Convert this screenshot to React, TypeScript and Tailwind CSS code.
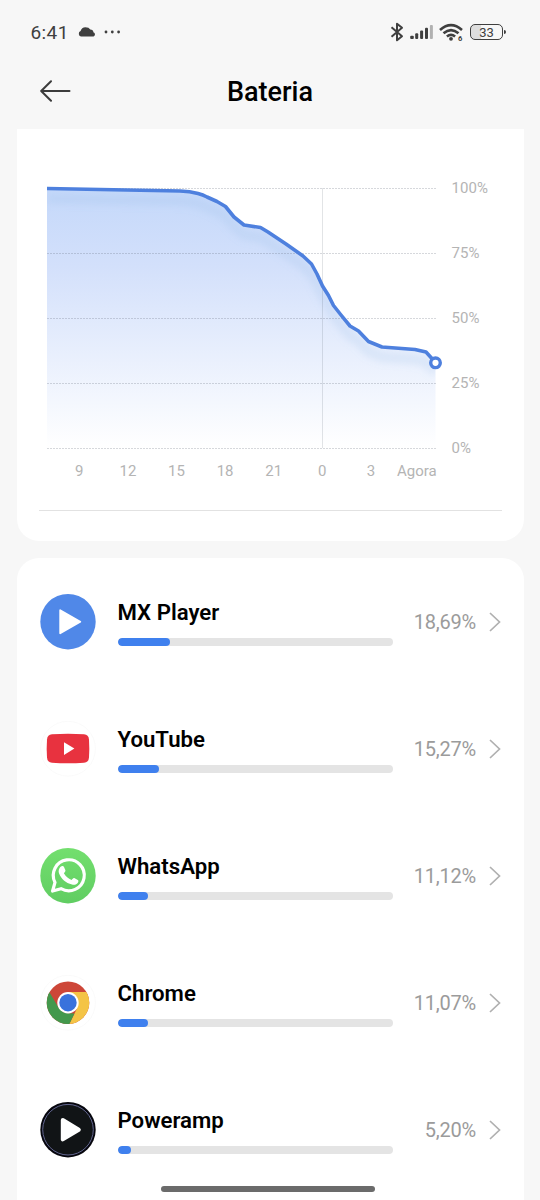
import type { ReactNode } from "react";

type AppUsage = {
  name: string;
  percent: string;
  barWidth: number;
  icon: ReactNode;
};

const yLabels = ["100%", "75%", "50%", "25%", "0%"];
const xLabels = ["9", "12", "15", "18", "21", "0", "3"];

const levelLine =
  "M0 6.5 L133 9 Q143 9.4 151 11.6 Q156 13 160 15 L170 19.5 L178.5 24.5 L187 35 L197 43 L213.5 45.5 L221 50 L239 62 L256 74 L264.5 82 L270 92 L275.5 104 L281.5 113.5 L286.5 123.5 L294 133 L303 144 L311.5 149 L321.5 159.5 L335 165 L368 167.5 L379 170 L388.5 180.5";

function MxPlayerIcon() {
  return (
    <svg viewBox="0 0 56 56" className="size-14">
      <circle cx="28" cy="27.7" r="27.7" fill="#5088e8" />
      <path
        d="M20.2 16.2 L40.3 27.7 L20.2 39.2 Z"
        fill="#fff"
        stroke="#fff"
        strokeWidth="1.8"
        strokeLinejoin="round"
      />
    </svg>
  );
}

function YouTubeIcon() {
  return (
    <svg viewBox="0 0 56 56" className="size-14">
      <circle cx="28" cy="27.7" r="27.4" fill="#fff" stroke="#f8f8f8" strokeWidth="0.7" />
      <path
        d="M12 13.2 Q28 12.2 44 13.2 Q48.6 13.5 49 18.5 Q49.6 27.5 49 36.5 Q48.6 41.5 44 41.8 Q28 42.8 12 41.8 Q7.4 41.5 7 36.5 Q6.4 27.5 7 18.5 Q7.4 13.5 12 13.2 Z"
        fill="#e8323f"
      />
      <path d="M24 21.2 L34.4 27.5 L24 34 Z" fill="#fff" />
    </svg>
  );
}

function WhatsAppIcon() {
  return (
    <svg viewBox="0 0 56 56" className="size-14">
      <defs>
        <linearGradient id="wa" x1="0" y1="0" x2="0" y2="1">
          <stop offset="0" stopColor="#73df6e" />
          <stop offset="1" stopColor="#60cd62" />
        </linearGradient>
      </defs>
      <circle cx="28" cy="27.7" r="27.7" fill="url(#wa)" />
      <path
        d="M12.6 43 L15 34.4 A15.5 15.5 0 1 1 21 40.7 Z"
        fill="none"
        stroke="#fff"
        strokeWidth="3.2"
        strokeLinejoin="round"
      />
      <path
        d="M22.3 19 C23.2 18.8 23.9 19 24.3 19.9 L25.7 23.3 C26 24.2 25 25.3 24.2 26.2 C26 29.5 28.5 31.6 31.9 33 C32.8 32 33.6 30.7 34.6 31.1 L38.1 32.9 C39 33.4 38.8 34.5 38.3 35.5 C37.2 37.5 34.6 38.3 32.3 37.6 C26 35.8 21.5 32 19.4 26.5 C18.3 23.5 19.7 19.8 22.3 19 Z"
        fill="#fff"
        transform="translate(-0.3 -1)"
      />
    </svg>
  );
}

function ChromeIcon() {
  return (
    <svg viewBox="0 0 56 56" className="size-14">
      <defs>
        <clipPath id="chromeDisc">
          <circle cx="28" cy="27.7" r="21.3" />
        </clipPath>
      </defs>
      <circle cx="28" cy="27.7" r="27.4" fill="#fff" stroke="#f8f8f8" strokeWidth="0.7" />
      <g clipPath="url(#chromeDisc)">
        <rect width="56" height="56" fill="#cd4638" />
        <path d="M28 17.1 H56 V56 H26 L37.2 33 Z" fill="#f4c446" />
        <path d="M4 8.2 L18.8 33 Q23 38.7 29 38.2 L34.5 38.4 L26 56 H0 Z" fill="#43984c" />
      </g>
      <circle cx="28" cy="27.7" r="10.7" fill="#fff" />
      <circle cx="28" cy="27.7" r="8.7" fill="#3972dc" />
    </svg>
  );
}

function PowerampIcon() {
  return (
    <svg viewBox="0 0 56 56" className="size-14">
      <circle cx="28" cy="27.7" r="27.7" fill="#06060d" />
      <circle cx="28" cy="27.7" r="25.3" fill="#111416" stroke="#62668f" strokeWidth="1" />
      <path
        d="M22.8 18 L38.8 27.7 L22.8 37.4 Z"
        fill="#fff"
        stroke="#fff"
        strokeWidth="4"
        strokeLinejoin="round"
      />
    </svg>
  );
}

const apps: AppUsage[] = [
  { name: "MX Player", percent: "18,69%", barWidth: 53, icon: <MxPlayerIcon /> },
  { name: "YouTube", percent: "15,27%", barWidth: 42, icon: <YouTubeIcon /> },
  { name: "WhatsApp", percent: "11,12%", barWidth: 31, icon: <WhatsAppIcon /> },
  { name: "Chrome", percent: "11,07%", barWidth: 31, icon: <ChromeIcon /> },
  { name: "Poweramp", percent: "5,20%", barWidth: 14, icon: <PowerampIcon /> },
];

function StatusBar() {
  return (
    <div className="flex h-16 items-center justify-between pr-[34px] pl-[30.5px] text-[#3f3f3f]">
      <div className="flex items-center">
        <span className="text-[19px] leading-none tracking-[0.4px]">6:41</span>
        <svg viewBox="0 0 18 10" className="ml-[9px] h-2.5 w-[18px]" fill="currentColor">
          <path d="M3 9.5 A2.9 2.9 0 0 1 2.6 4 Q3.6 0.6 7.4 0.3 Q11 0.3 12.3 2.6 Q15.2 2.8 15.4 5.2 A2.3 2.3 0 0 1 15.6 9.5 Z" />
        </svg>
        <svg viewBox="0 0 17 4" className="ml-2 h-1 w-[17px]" fill="currentColor">
          <circle cx="2" cy="2" r="1.4" />
          <circle cx="8.3" cy="2" r="1.4" />
          <circle cx="14.6" cy="2" r="1.4" />
        </svg>
      </div>

      <div className="flex items-center">
        <svg viewBox="0 0 14 20" className="h-5 w-3.5" fill="none" stroke="currentColor" strokeWidth="2">
          <path d="M1.5 5.3 L12 14.2 L7 18.3 V1.7 L12 5.8 L1.5 14.7" strokeLinejoin="round" />
        </svg>
        <svg viewBox="0 0 24 16" className="ml-1.5 h-4 w-6" fill="currentColor">
          <rect x="0.2" y="11.8" width="3.6" height="3.2" rx="1" />
          <rect x="5.2" y="9.3" width="3" height="5.7" rx="1" />
          <rect x="10.1" y="6.6" width="3" height="8.4" rx="1" />
          <rect x="15" y="3.8" width="3" height="11.2" rx="1" />
          <rect x="19.9" y="1" width="3" height="14" rx="1" fill="#b1b1b1" />
        </svg>
        <svg viewBox="0 0 25 19" className="ml-[5px] h-[19px] w-[25px]" fill="none" stroke="currentColor" strokeWidth="2.6">
          <path d="M1 6.9 Q12 -2.8 23 6.9" />
          <path d="M4.5 10.3 Q12 4 19.5 10.3" />
          <path d="M7.9 13.5 Q12 10.2 16.1 13.5" />
          <circle cx="12" cy="15.8" r="1.9" fill="currentColor" stroke="none" />
          <text x="19" y="18.3" fontSize="7.5" fontWeight="700" fill="currentColor" stroke="none">
            6
          </text>
        </svg>
        <div className="ml-1.5 flex items-center">
          <div className="flex h-4 w-[33px] items-center justify-center rounded-[5px] border-[1.5px] border-current bg-linear-to-r from-[#dedede] from-33% to-transparent to-33% text-[13px] leading-none">
            33
          </div>
          <div className="ml-px h-1 w-0.5 rounded-r bg-current" />
        </div>
      </div>
    </div>
  );
}

function BatteryChart() {
  return (
    <section className="h-[412px] rounded-b-[22px] bg-white px-[22px] pt-[53px]">
      <div className="flex pl-2">
        <svg viewBox="0 0 396 270" className="h-[270px] w-[396px] shrink-0">
          <defs>
            <linearGradient id="levelFill" x1="0" y1="6" x2="0" y2="266" gradientUnits="userSpaceOnUse">
              <stop offset="0" stopColor="#c4d8fa" />
              <stop offset="0.3" stopColor="#d3e0fb" />
              <stop offset="1" stopColor="#ffffff" />
            </linearGradient>
            <clipPath id="levelArea">
              <path d={`${levelLine} V266.5 H0 Z`} />
            </clipPath>
            <filter id="soft" x="-10%" y="-10%" width="120%" height="130%">
              <feGaussianBlur stdDeviation="3.5" />
            </filter>
          </defs>
          <path d={`${levelLine} V266.5 H0 Z`} fill="url(#levelFill)" />
          <g clipPath="url(#levelArea)">
            <path
              d={levelLine}
              transform="translate(0 10)"
              fill="none"
              stroke="#8fb7e6"
              strokeOpacity="0.18"
              strokeWidth="10"
              filter="url(#soft)"
            />
          </g>
          {[6.5, 71.5, 136.5, 201.5, 266.5].map((y) => (
            <path
              key={y}
              d={`M0 ${y} H389`}
              stroke="#5b6472"
              strokeOpacity="0.25"
              strokeWidth="1"
              strokeDasharray="2 1"
            />
          ))}
          <path d="M275.5 6 V266" stroke="#4b5563" strokeOpacity="0.16" />
          <path d={levelLine} fill="none" stroke="#4e80de" strokeWidth="3.6" strokeLinejoin="round" />
          <circle cx="388.5" cy="180.8" r="4.8" fill="#fff" stroke="#4e80de" strokeWidth="3.4" />
        </svg>
        <div className="-mt-[2px] ml-[9px] flex h-[276px] flex-col justify-between text-[15px] leading-4 tracking-[0.1px] text-[#b4b4b4]">
          {yLabels.map((label) => (
            <span key={label}>{label}</span>
          ))}
        </div>
      </div>

      <div className="flex pt-[7px] pl-[16.5px] text-[15px] leading-4 text-[#b4b4b4]">
        {xLabels.map((label) => (
          <span key={label} className="w-[48.6px] text-center">
            {label}
          </span>
        ))}
        <span className="w-[41.5px] text-right">Agora</span>
      </div>

      <div className="mt-[31px] h-px bg-[#e2e2e2]" />
    </section>
  );
}

function AppRow({ app }: { app: AppUsage }) {
  return (
    <li className="flex h-[127px] items-center pr-[22.5px] pl-[23px]">
      {app.icon}
      <div className="ml-[22px] w-[275.5px] pb-px">
        <div className="pt-[3px] text-[22.2px] leading-[26px] font-semibold text-black">{app.name}</div>
        <div className="mt-[13px] h-2 overflow-hidden rounded-full bg-[#e4e4e4]">
          <div className="h-full rounded-full bg-[#3f80ee]" style={{ width: app.barWidth - 0.5 }} />
        </div>
      </div>
      <span className="flex-1 text-right text-[20px] leading-6 tracking-[-0.2px] text-[#9b9b9b]">
        {app.percent}
      </span>
      <svg
        viewBox="0 0 12 20"
        className="ml-[13px] h-5 w-3"
        fill="none"
        stroke="#b0b0b0"
        strokeWidth="1.7"
      >
        <path d="M1 1 L10.5 10 L1 19" />
      </svg>
    </li>
  );
}

export default function App() {
  return (
    <main className="relative flex h-[1200px] w-[540px] flex-col overflow-hidden bg-[#f7f7f7] font-[Roboto,sans-serif]">
      <StatusBar />

      <header className="grid h-[65px] shrink-0 grid-cols-[1fr_auto_1fr] items-center px-10 pb-[10px]">
        <svg
          viewBox="0 0 31 22"
          className="-mt-px h-[22px] w-[31px]"
          fill="none"
          stroke="#3c3c3c"
          strokeWidth="2"
          strokeLinecap="round"
          strokeLinejoin="round"
        >
          <path d="M29.5 11 H1.5 M11 1.2 L1.2 11 L11 20.8" />
        </svg>
        <h1 className="text-[27px] leading-8 font-medium text-black">Bateria</h1>
      </header>

      <div className="flex grow flex-col px-[16.5px]">
        <BatteryChart />
        <ul className="mt-[17px] grow rounded-t-[22px] bg-white">
          {apps.map((app) => (
            <AppRow key={app.name} app={app} />
          ))}
        </ul>
      </div>

      <div className="absolute bottom-2 left-[161px] h-[6px] w-[214px] rounded-full bg-[#6b6b6b]" />
    </main>
  );
}
